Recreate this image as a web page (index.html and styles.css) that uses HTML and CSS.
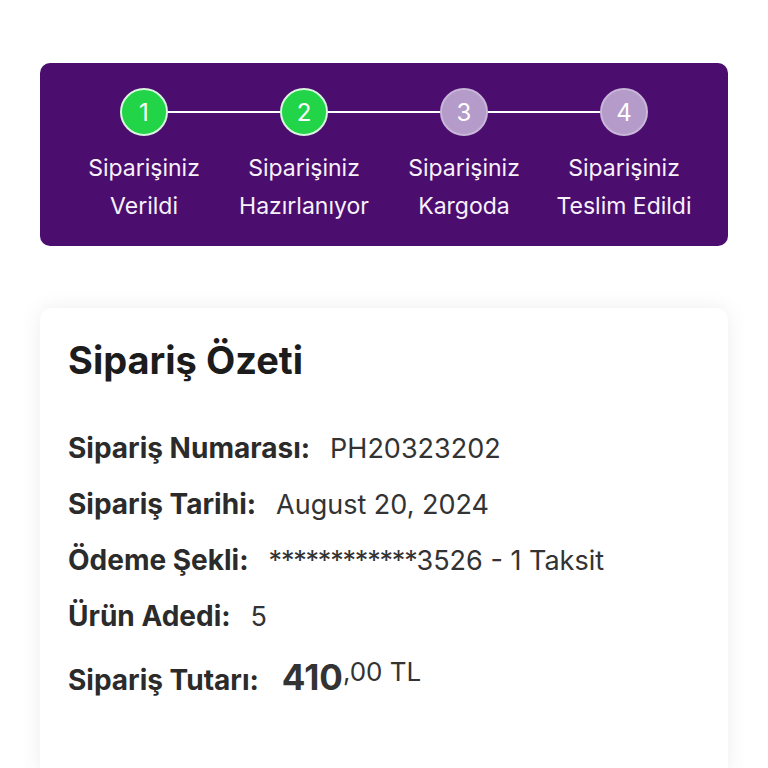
FILE: index.html
```
<!DOCTYPE html>
<html lang="tr">
<head>
<meta charset="utf-8">
<link rel="stylesheet" href="styles.css">
</head>
<body>
<div class="page">
  <div class="tracker">
    <div class="step done">
      <div class="dot">1</div>
      <div class="label">Siparişiniz<br>Verildi</div>
    </div>
    <div class="step done">
      <div class="dot">2</div>
      <div class="label">Siparişiniz<br>Hazırlanıyor</div>
    </div>
    <div class="step">
      <div class="dot">3</div>
      <div class="label">Siparişiniz<br>Kargoda</div>
    </div>
    <div class="step last">
      <div class="dot">4</div>
      <div class="label">Siparişiniz<br>Teslim Edildi</div>
    </div>
  </div>

  <div class="card">
    <h1 class="title">Sipariş Özeti</h1>
    <div class="row"><span class="key">Sipariş Numarası:</span><span class="val">PH20323202</span></div>
    <div class="row"><span class="key">Sipariş Tarihi:</span><span class="val">August 20, 2024</span></div>
    <div class="row"><span class="key">Ödeme Şekli:</span><span class="val"><span class="mask">************</span>3526 - 1 Taksit</span></div>
    <div class="row"><span class="key">Ürün Adedi:</span><span class="val">5</span></div>
    <div class="row"><span class="key">Sipariş Tutarı:</span><span class="val price"><span class="big">410</span><span class="cents">,00 TL</span></span></div>
  </div>
</div>
</body>
</html>
```
FILE: styles.css
```
html, body {
  margin: 0;
  padding: 0;
  background: #ffffff;
  font-family: Inter, "Noto Sans", sans-serif;
}
.page {
  padding: 63px 40px 0;
}
.tracker {
  background: #4b0e6f;
  border-radius: 10px;
  height: 183px;
  box-sizing: border-box;
  padding: 25px 24px 0;
  display: grid;
  grid-template-columns: repeat(4, 1fr);
}
.step {
  position: relative;
  display: flex;
  flex-direction: column;
  align-items: center;
}
.step::after {
  content: "";
  position: absolute;
  top: 23px;
  left: 50%;
  width: 100%;
  height: 2px;
  background: #ffffff;
  z-index: 0;
}
.step.last::after {
  display: none;
}
.dot {
  position: relative;
  z-index: 1;
  width: 48px;
  height: 48px;
  box-sizing: border-box;
  border-radius: 50%;
  background: #b59bc9;
  border: 2px solid #c9b6d8;
  color: #ffffff;
  font-size: 24px;
  display: flex;
  align-items: center;
  justify-content: center;
}
.step.done .dot {
  background: #22d548;
  border-color: #d9f7df;
}
.label {
  margin-top: 13px;
  color: #f8f1fb;
  font-size: 23px;
  line-height: 38px;
  text-align: center;
  white-space: nowrap;
}
.card {
  margin-top: 62px;
  background: #ffffff;
  border-radius: 12px;
  box-shadow: 0 0 22px rgba(0, 0, 0, 0.07);
  padding: 28px 28px 80px;
}
.title {
  margin: 0 0 36px;
  font-size: 38px;
  font-weight: 700;
  color: #1c1c1c;
  line-height: 48px;
}
.row {
  display: flex;
  align-items: baseline;
  height: 56px;
  line-height: 56px;
  font-size: 27px;
}
.key {
  font-weight: 700;
  font-size: 28px;
  color: #2b2b2b;
  margin-right: 20px;
}
.val {
  color: #333333;
}
.mask {
  letter-spacing: -1.2px;
}
.price {
  margin-left: 3px;
}
.big {
  font-weight: 700;
  font-size: 35px;
}
.cents {
  font-size: 26px;
  vertical-align: 9px;
}
```
